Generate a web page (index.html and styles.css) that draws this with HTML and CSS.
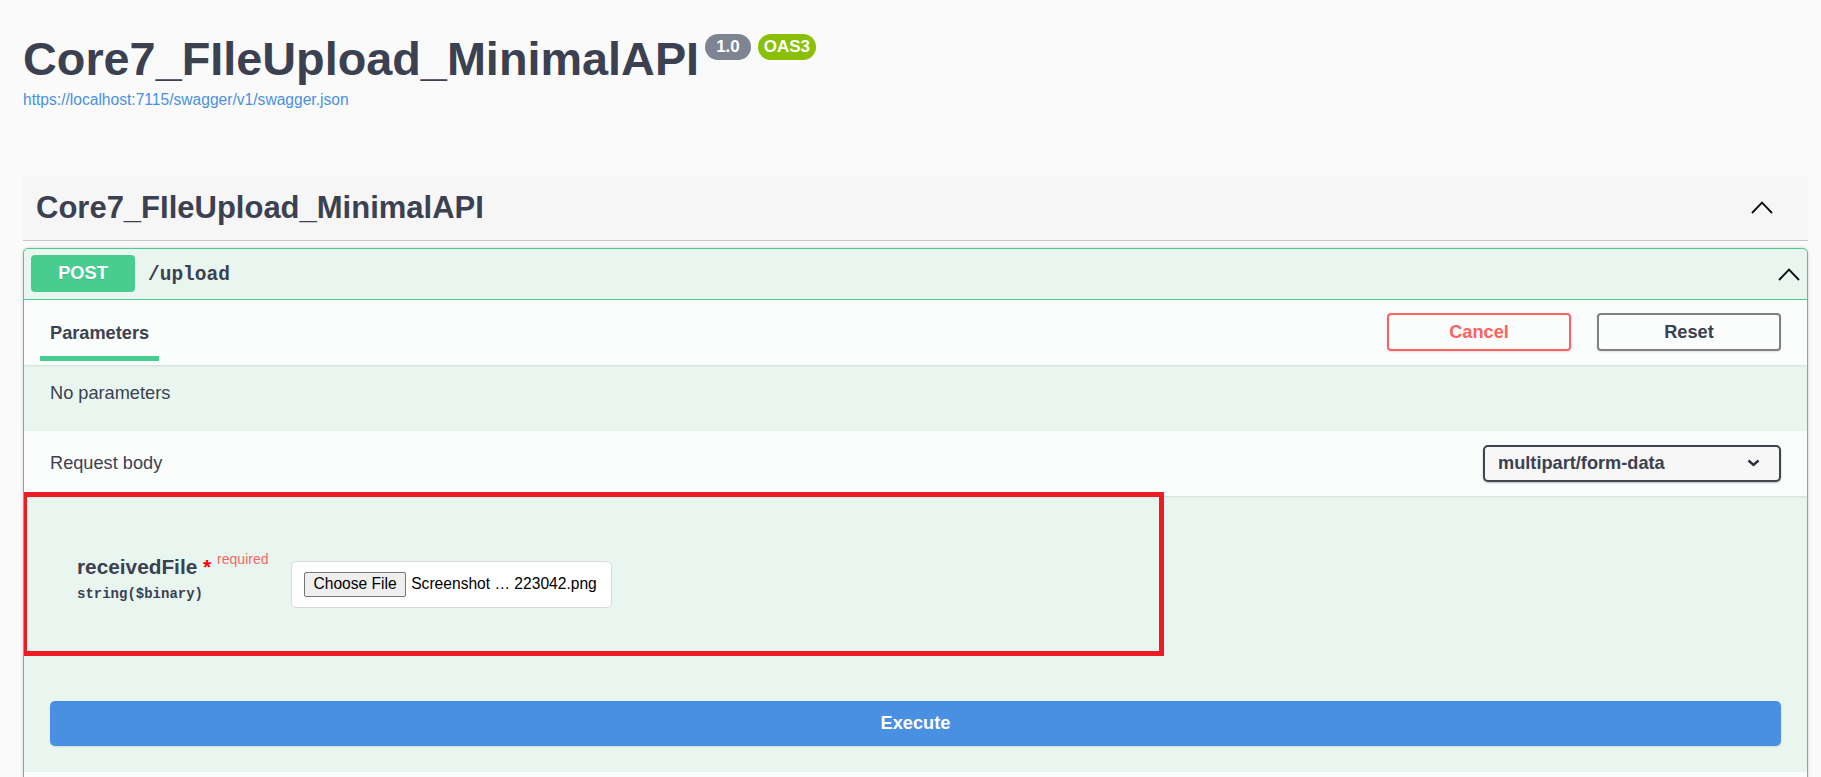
FILE: index.html
```html
<!DOCTYPE html>
<html lang="en">
<head>
<meta charset="utf-8">
<title>Swagger UI</title>
<link rel="stylesheet" href="styles.css">
</head>
<body>
<div class="page">
  <div class="info">
    <div class="title-row">
      <h2 class="title">Core7_FIleUpload_MinimalAPI</h2>
      <span class="badge badge-version">1.0</span>
      <span class="badge badge-oas">OAS3</span>
    </div>
    <a class="spec-link" href="#">https://localhost:7115/swagger/v1/swagger.json</a>
  </div>

  <section class="tag-section">
    <div class="tag-header">
      <h3 class="tag-name">Core7_FIleUpload_MinimalAPI</h3>
      <svg class="tag-arrow" width="22" height="13" viewBox="0 0 22 13"><polyline points="1,12 11,1.6 21,12" fill="none" stroke="#111" stroke-width="1.9"/></svg>
    </div>

    <div class="opblock">
      <div class="summary">
        <span class="method">POST</span>
        <span class="path">/upload</span>
        <svg class="summary-arrow" width="22" height="13" viewBox="0 0 22 13"><polyline points="1,12 11,1.6 21,12" fill="none" stroke="#111" stroke-width="1.9"/></svg>
      </div>

      <div class="section-header params-header">
        <div class="tab">
          <h4 class="tab-title">Parameters</h4>
          <div class="tab-bar"></div>
        </div>
        <div class="btn-group">
          <button class="btn btn-cancel">Cancel</button>
          <button class="btn btn-reset">Reset</button>
        </div>
      </div>

      <div class="description"><p>No parameters</p></div>

      <div class="section-header body-header">
        <h4 class="body-title">Request body</h4>
        <div class="content-select">
          <span>multipart/form-data</span>
          <svg width="13" height="8" viewBox="0 0 13 8"><polyline points="1.5,1.5 6.5,6 11.5,1.5" fill="none" stroke="#2b2f3a" stroke-width="2.4"/></svg>
        </div>
      </div>

      <div class="body-content">
        <div class="param-row">
          <div class="param-name-col">
            <div class="param-name">receivedFile<span class="req-star">&nbsp;*</span><span class="req-label">required</span></div>
            <div class="param-type">string($binary)</div>
          </div>
          <div class="file-input">
            <span class="file-btn">Choose File</span>
            <span class="file-name">Screenshot … 223042.png</span>
          </div>
        </div>
        <div class="annotation"></div>
      </div>

      <div class="execute-wrapper">
        <button class="execute">Execute</button>
      </div>

      <div class="section-header responses-header"></div>
    </div>
  </section>
</div>
</body>
</html>
```

FILE: styles.css
```css
html, body {
  margin: 0;
  padding: 0;
  background: #fafafa;
  overflow: hidden;
}

body {
  font-family: "Liberation Sans", Arial, sans-serif;
  color: #3b4151;
}

.page {
  padding: 0 13px 0 23px;
}

/* ---------- info ---------- */
.info {
  padding-top: 32px;
  padding-bottom: 67px;
}

.title-row {
  display: flex;
  align-items: flex-start;
}

.title {
  margin: 0;
  font-size: 46.8px;
  line-height: 54px;
  font-weight: 700;
  color: #3b4151;
}

.badge {
  margin-top: 2px;
  font-size: 17px;
  line-height: 20px;
  font-weight: 700;
  color: #fff;
  border-radius: 57px;
  padding: 3px 0;
}

.badge-version {
  margin-left: 6px;
  padding-left: 11px;
  padding-right: 11px;
  background: #7d8492;
}

.badge-oas {
  margin-left: 7px;
  padding-left: 6px;
  padding-right: 6px;
  background: #89bf04;
}

.spec-link {
  display: block;
  margin-top: 4.5px;
  font-size: 15.6px;
  line-height: 18px;
  color: #4990e2;
  text-decoration: none;
}

/* ---------- tag ---------- */
.tag-header {
  display: flex;
  align-items: center;
  justify-content: space-between;
  height: 64px;
  padding: 0 35px 0 13px;
  background: #f6f6f6;
  border-bottom: 1px solid #c4c6cb;
}

.tag-name {
  margin: 0;
  font-size: 31px;
  line-height: 38px;
  font-weight: 700;
  color: #3b4151;
}

.tag-arrow {
  display: block;
}

/* ---------- opblock ---------- */
.opblock {
  margin-top: 7px;
  border: 1px solid #49cc90;
  border-radius: 5px;
  background: #e8f6ef;
  box-shadow: 0 0 3px rgba(0, 0, 0, 0.19);
  overflow: hidden;
}

.summary {
  display: flex;
  align-items: center;
  padding: 6px 7px 7px 7px;
  border-bottom: 1px solid #49cc90;
}

.method {
  width: 104px;
  height: 37px;
  display: flex;
  align-items: center;
  justify-content: center;
  background: #49cc90;
  border-radius: 4px;
  color: #fff;
  font-size: 18.2px;
  font-weight: 700;
  text-shadow: 0 1px 0 rgba(0, 0, 0, 0.1);
}

.path {
  flex: 1;
  padding-left: 13px;
  padding-top: 3px;
  font-family: "Liberation Mono", "DejaVu Sans Mono", monospace;
  font-size: 19.5px;
  font-weight: 700;
  color: #3b4151;
}

.summary-arrow {
  display: block;
  margin-top: 3px;
}

.section-header {
  display: flex;
  align-items: center;
  height: 65px;
  padding: 0 26px;
  background: rgba(255, 255, 255, 0.8);
  box-shadow: 0 1px 2px rgba(0, 0, 0, 0.1);
  position: relative;
}

.params-header {
  align-items: stretch;
  justify-content: space-between;
}

.tab {
  display: flex;
  flex-direction: column;
  padding-top: 22px;
}

.tab-title {
  margin: 0;
  font-size: 18.2px;
  line-height: 22px;
  font-weight: 700;
  color: #3b4151;
}

.tab-bar {
  margin-top: auto;
  margin-bottom: 4px;
  margin-left: -10px;
  width: 119px;
  height: 5px;
  background: #49cc90;
}

.btn-group {
  display: flex;
  align-items: center;
  gap: 26px;
}

.btn {
  width: 184px;
  height: 38px;
  box-sizing: border-box;
  background: transparent;
  border: 2px solid #808080;
  border-radius: 4px;
  font-family: "Liberation Sans", Arial, sans-serif;
  font-size: 18.2px;
  font-weight: 700;
  color: #3b4151;
  box-shadow: 0 1px 2px rgba(0, 0, 0, 0.1);
  padding: 0;
}

.btn-cancel {
  border-color: #ff6060;
  color: #ff6060;
}

.description {
  padding: 15.5px 26px 24.5px;
}

.description p {
  margin: 0;
  font-size: 18.2px;
  line-height: 26px;
  color: #3b4151;
}

.body-header {
  justify-content: space-between;
}

.body-title {
  margin: 0;
  font-size: 18.2px;
  line-height: 22px;
  font-weight: 400;
  color: #3b4151;
}

.content-select {
  width: 298px;
  height: 37px;
  box-sizing: border-box;
  display: flex;
  align-items: center;
  justify-content: space-between;
  padding: 0 19px 0 13px;
  border: 2px solid #41444e;
  border-radius: 5px;
  background: #f7f7f7;
  box-shadow: 0 1px 2px 0 rgba(0, 0, 0, 0.25);
  font-size: 18.2px;
  font-weight: 700;
  color: #3b4151;
}

.content-select svg {
  display: block;
}

/* ---------- body ---------- */
.body-content {
  position: relative;
  padding: 58px 0 67px 53px;
}

.param-row {
  display: flex;
  align-items: flex-start;
}

.param-name-col {
  width: 214px;
}

.param-name {
  font-size: 20.8px;
  line-height: 26px;
  font-weight: 700;
  color: #3b4151;
  white-space: nowrap;
}

.req-star {
  color: #ff0000;
}

.req-label {
  padding-left: 6px;
  font-size: 14px;
  font-weight: 400;
  color: #f76666;
  vertical-align: 10px;
  line-height: 0;
}

.param-type {
  margin-top: 5px;
  font-family: "Liberation Mono", "DejaVu Sans Mono", monospace;
  font-size: 14px;
  line-height: 18px;
  font-weight: 700;
  color: #3b4151;
}

.file-input {
  margin-top: 7px;
  display: flex;
  align-items: center;
  padding: 10px 14px 10px 12px;
  background: #fff;
  border: 1px solid #d9d9d9;
  border-radius: 5px;
  font-size: 15.6px;
  color: #000;
}

.file-btn {
  height: 25px;
  box-sizing: border-box;
  display: flex;
  align-items: center;
  padding: 0 8.5px;
  background: #efefef;
  border: 1px solid #767676;
  border-radius: 2px;
}

.file-name {
  margin-left: 5px;
  white-space: nowrap;
}

.annotation {
  position: absolute;
  left: -2px;
  top: -4px;
  width: 1142px;
  height: 164px;
  box-sizing: border-box;
  border: 5px solid #ed1c24;
  z-index: 2;
}

.execute-wrapper {
  padding: 26px;
}

.execute {
  display: block;
  width: 100%;
  height: 45px;
  border: 0;
  border-radius: 5px;
  background: #4990e2;
  color: #fff;
  font-family: "Liberation Sans", Arial, sans-serif;
  font-size: 18.2px;
  font-weight: 700;
  box-shadow: 0 1px 2px rgba(0, 0, 0, 0.1);
}

.responses-header {
  height: 65px;
}
```
